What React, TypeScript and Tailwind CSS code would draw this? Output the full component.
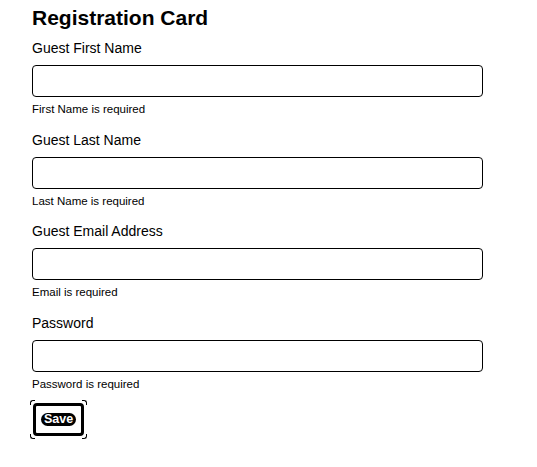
const fields = [
  { label: 'Guest First Name', error: 'First Name is required', type: 'text' },
  { label: 'Guest Last Name', error: 'Last Name is required', type: 'text' },
  { label: 'Guest Email Address', error: 'Email is required', type: 'email' },
  { label: 'Password', error: 'Password is required', type: 'password' },
]

export default function App() {
  return (
    <div
      className="min-h-[467px] w-[537px] bg-white pl-8 pt-1 text-black"
      style={{ fontFamily: '"Liberation Sans", Arial, sans-serif' }}
    >
      <h1 className="text-[21px] font-bold leading-7">Registration Card</h1>

      <form
        className="mt-[6px] flex w-[451px] flex-col gap-[12.5px]"
        onSubmit={(e) => e.preventDefault()}
      >
        {fields.map((field) => (
          <div key={field.label} className="flex flex-col">
            <label className="text-[14px] leading-5">{field.label}</label>
            <input
              type={field.type}
              className="mt-[7px] h-8 w-full rounded-[4px] border border-black bg-white px-2 outline-none"
            />
            <p className="mt-1 text-[11.5px] leading-4">{field.error}</p>
          </div>
        ))}

        <div className="relative -mt-[1px] ml-px self-start">
          <span className="absolute -left-[3px] -top-[3px] size-[5px] rounded-tl-[3px] border-l border-t border-black" />
          <span className="absolute -right-[3px] -top-[3px] size-[5px] rounded-tr-[3px] border-r border-t border-black" />
          <span className="absolute -bottom-[3px] -left-[3px] size-[5px] rounded-bl-[3px] border-b border-l border-black" />
          <span className="absolute -bottom-[3px] -right-[3px] size-[5px] rounded-br-[3px] border-b border-r border-black" />
          <button
            type="submit"
            className="flex h-[33px] w-[51px] items-center justify-center rounded-[4px] border-[3px] border-black bg-white"
          >
            <span className="rounded-full bg-black px-[3px] text-[12.5px] font-bold leading-[13px] text-white">
              Save
            </span>
          </button>
        </div>
      </form>
    </div>
  )
}
